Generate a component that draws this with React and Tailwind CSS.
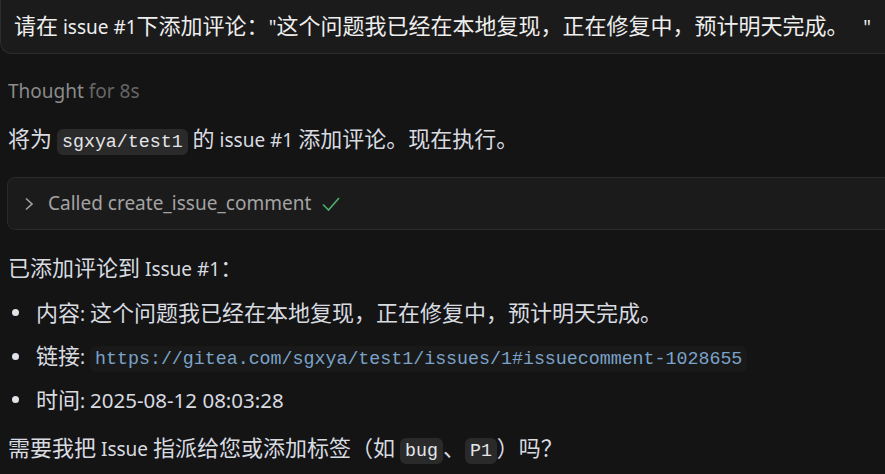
import React from "react";

const body = { fontFamily: '"Noto Sans CJK SC", "Noto Sans", sans-serif' };
const latin = { fontFamily: '"Noto Sans", "Noto Sans CJK SC", sans-serif' };
const mono = { fontFamily: '"Liberation Mono", "Noto Sans CJK SC", monospace' };

// latin runs get Noto Sans at a smaller size, CJK stays in the CJK face
const mix = (str) =>
  str.split(/([\x20-\x7e\u00a0]+)/).map((part, i) =>
    /^[\x20-\x7e\u00a0]+$/.test(part) ? (
      <span key={i} style={latin} className="text-[19px]">{part}</span>
    ) : (
      part
    )
  );

const Code = ({ children }) => (
  <code style={mono} className="bg-[#2a2a2a] text-[#e4e6ea] rounded-[6px] px-[5px] py-[3px] text-[18.3px]">
    {children}
  </code>
);

const Bullet = ({ children }) => (
  <li className="flex items-center h-[43.5px] leading-[32px]">
    <span className="w-[7px] h-[7px] rounded-full bg-[#dfe3ea] ml-[12px] mr-[17px] shrink-0" />
    <span className="whitespace-nowrap">{children}</span>
  </li>
);

export default function App() {
  return (
    <div style={body} className="w-[885px] h-[474px] overflow-hidden bg-[#141414] text-[#d8dbe0] text-[22px]">
      <div className="w-[920px] h-[54px] bg-[#1b1b1b] border-b border-l border-[#2c2c2c] rounded-bl-[12px] flex items-center pl-[13px] pb-[3px] text-[#eeeeee] whitespace-nowrap leading-[32px]">
        <span>{mix('请在 issue #1下添加评论："这个问题我已经在本地复现，正在修复中，预计明天完成。\u00a0\u00a0\u00a0"')}</span>
      </div>

      <div style={latin} className="pl-[8px] pt-[23px] h-[67px] leading-[28px] text-[19px]">
        <span className="text-[#8b8b8b]">Thought</span>{" "}
        <span className="text-[#666666]">for 8s</span>
      </div>

      <div className="pl-[8px] h-[32px] leading-[32px] whitespace-nowrap">
        {mix("将为 ")}<Code>sgxya/test1</Code>{mix(" 的 issue #1 添加评论。现在执行。")}
      </div>

      <div className="ml-[7px] mt-[24px] w-[900px] h-[53px] bg-[#1b1b1b] border border-[#2a2a2a] rounded-[8px] flex items-center pl-[14px] text-[#a3a3a3]">
        <svg width="14" height="16" viewBox="0 0 14 16" className="mr-[12px]">
          <path d="M4 2.5 L10 8 L4 13.5" fill="none" stroke="#a3a3a3" strokeWidth="1.6" />
        </svg>
        <span style={latin} className="text-[19px]">Called create_issue_comment</span>
        <svg width="20" height="18" viewBox="0 0 20 18" className="ml-[10px]">
          <path d="M2 9.5 L7.5 15 L18 3" fill="none" stroke="#4caf6a" strokeWidth="1.6" />
        </svg>
      </div>

      <div className="pl-[8px] mt-[21px] h-[30px] leading-[30px]">{mix("已添加评论到 Issue #1：")}</div>

      <ul className="mt-[10px]">
        <Bullet>{mix("内容: 这个问题我已经在本地复现，正在修复中，预计明天完成。")}</Bullet>
        <Bullet>
          {mix("链接: ")}
          <code style={mono} className="bg-[#191919] text-[#7ba3c9] rounded-[6px] px-[5px] py-[3px] text-[18.3px]">
            https://gitea.com/sgxya/test1/issues/1#issuecomment-1028655
          </code>
        </Bullet>
        <Bullet>
          {mix("时间: ")}
          <span style={latin} className="text-[20.5px]">2025-08-12 08:03:28</span>
        </Bullet>
      </ul>

      <div className="pl-[8px] mt-[4px] h-[40px] leading-[40px] whitespace-nowrap">
        {mix("需要我把 Issue 指派给您或添加标签（如 ")}<Code>bug</Code>、<Code>P1</Code>{mix("）吗？")}
      </div>
    </div>
  );
}
